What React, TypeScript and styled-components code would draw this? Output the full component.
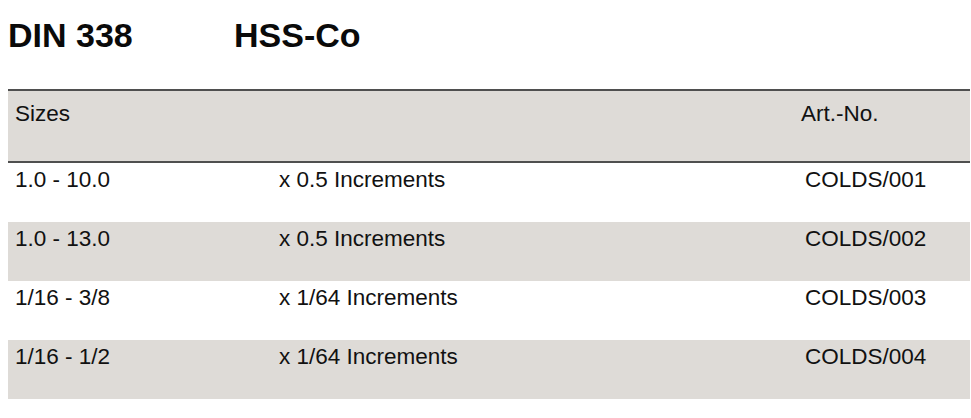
import styled, { createGlobalStyle } from "styled-components";

const GlobalStyle = createGlobalStyle`
  body {
    margin: 0;
    background: #ffffff;
    font-family: "Liberation Sans", Arial, sans-serif;
    color: #111111;
  }
`;

// Page
const Page = styled.div`
  width: 971px;
  padding: 16px 0 0 8px;
  box-sizing: border-box;
`;

const TitleRow = styled.div`
  display: grid;
  grid-template-columns: 226px auto;
  margin-bottom: 34px;
`;

const Title = styled.h1`
  margin: 0;
  font-size: 34px;
  line-height: 39px;
  font-weight: 700;
  color: #0a0a0a;
`;

// Table
const Table = styled.div`
  width: 962px;
  display: flex;
  flex-direction: column;
`;

const HeaderRow = styled.div`
  display: grid;
  grid-template-columns: 264px 526px 1fr;
  height: 70px;
  background: #dedbd7;
  border-top: 2px solid #4f4f4f;
  border-bottom: 2px solid #4f4f4f;
`;

const HeaderCell = styled.div<{ $indent?: number }>`
  padding: 10px 0 0 ${(p) => p.$indent ?? 7}px;
  font-size: 22.5px;
  line-height: 25px;
`;

const Row = styled.div<{ $shaded: boolean }>`
  display: grid;
  grid-template-columns: 264px 526px 1fr;
  height: 59px;
  background: ${(p) => (p.$shaded ? "#dedbd7" : "#ffffff")};
`;

const Cell = styled.div`
  padding: 4px 0 0 7px;
  font-size: 22.5px;
  line-height: 25px;
`;

const rows = [
  { size: "1.0 - 10.0", step: "x 0.5 Increments", art: "COLDS/001" },
  { size: "1.0 - 13.0", step: "x 0.5 Increments", art: "COLDS/002" },
  { size: "1/16 - 3/8", step: "x 1/64 Increments", art: "COLDS/003" },
  { size: "1/16 - 1/2", step: "x 1/64 Increments", art: "COLDS/004" },
];

const App = () => {
  return (
    <Page>
      <GlobalStyle />
      <TitleRow>
        <Title>DIN 338</Title>
        <Title>HSS-Co</Title>
      </TitleRow>
      <Table>
        <HeaderRow>
          <HeaderCell>Sizes</HeaderCell>
          <HeaderCell />
          <HeaderCell $indent={3}>Art.-No.</HeaderCell>
        </HeaderRow>
        {rows.map((r, i) => (
          <Row key={r.art} $shaded={i % 2 === 1}>
            <Cell>{r.size}</Cell>
            <Cell>{r.step}</Cell>
            <Cell>{r.art}</Cell>
          </Row>
        ))}
      </Table>
    </Page>
  );
};

export default App;
